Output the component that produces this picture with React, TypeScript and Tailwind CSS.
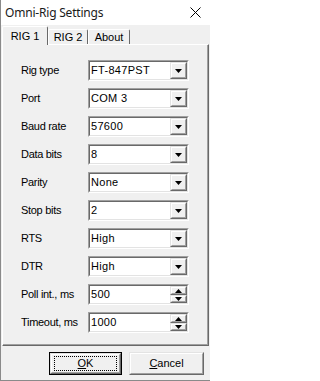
import React from "react";

type Field = {
  label: string;
  value: string;
  kind: "combo" | "spin";
};

const fields: Field[] = [
  { label: "Rig type", value: "FT-847PST", kind: "combo" },
  { label: "Port", value: "COM 3", kind: "combo" },
  { label: "Baud rate", value: "57600", kind: "combo" },
  { label: "Data bits", value: "8", kind: "combo" },
  { label: "Parity", value: "None", kind: "combo" },
  { label: "Stop bits", value: "2", kind: "combo" },
  { label: "RTS", value: "High", kind: "combo" },
  { label: "DTR", value: "High", kind: "combo" },
  { label: "Poll int., ms", value: "500", kind: "spin" },
  { label: "Timeout, ms", value: "1000", kind: "spin" },
];

// classic raised 3D edge
function Raised({ className = "", children }: { className?: string; children?: React.ReactNode }) {
  return (
    <div
      className={`border border-t-[#e3e3e3] border-l-[#e3e3e3] border-r-[#696969] border-b-[#696969] bg-[#f0f0f0] ${className}`}
    >
      <div className="w-full h-full border border-t-white border-l-white border-r-[#a0a0a0] border-b-[#a0a0a0] flex items-center justify-center">
        {children}
      </div>
    </div>
  );
}

function DropButton() {
  return (
    <Raised className="w-[17px] h-[17px]">
      <svg width="7" height="4" viewBox="0 0 7 4">
        <path d="M0 0h7L3.5 4z" fill="#000" />
      </svg>
    </Raised>
  );
}

function SpinButton() {
  return (
    <div className="flex flex-col w-[17px] h-[17px]">
      <Raised className="w-[17px] h-[9px]">
        <svg width="7" height="4" viewBox="0 0 7 4">
          <path d="M3.5 0L7 4H0z" fill="#000" />
        </svg>
      </Raised>
      <Raised className="w-[17px] h-[8px]">
        <svg width="7" height="4" viewBox="0 0 7 4">
          <path d="M0 0h7L3.5 4z" fill="#000" />
        </svg>
      </Raised>
    </div>
  );
}

function FieldBox({ field }: { field: Field }) {
  return (
    <div className="w-[101px] h-[21px] border border-t-[#a0a0a0] border-l-[#a0a0a0] border-r-white border-b-white">
      <div className="w-full h-full border border-t-[#696969] border-l-[#696969] border-r-[#e3e3e3] border-b-[#e3e3e3] bg-white flex items-center justify-between">
        <span className="pl-[1px] leading-none text-black tracking-[0.3px]">{field.value}</span>
        {field.kind === "combo" ? <DropButton /> : <SpinButton />}
      </div>
    </div>
  );
}

function Tab({ label, active, width }: { label: string; active?: boolean; width: string }) {
  if (active) {
    return (
      <div
        className={`relative z-10 -mb-px h-[19px] ${width} bg-[#f0f0f0] border-t border-l border-t-white border-l-white border-r border-r-[#696969] rounded-t-[2px] flex items-center justify-center`}
      >
        {label}
      </div>
    );
  }
  return (
    <div
      className={`h-[15px] ${width} bg-[#f0f0f0] border-t border-l border-t-white border-l-white border-r border-r-[#696969] rounded-t-[2px] flex items-center justify-center`}
    >
      {label}
    </div>
  );
}

function DialogButton({ label, def, width }: { label: React.ReactNode; def?: boolean; width: string }) {
  if (def) {
    return (
      <div className={`${width} h-[23px] border border-black`}>
        <Raised className="w-full h-full">
          <div className="w-[63px] h-[15px] border border-dotted border-black flex items-center justify-center">
            {label}
          </div>
        </Raised>
      </div>
    );
  }
  return <Raised className={`${width} h-[23px]`}>{label}</Raised>;
}

export default function App() {
  return (
    <div
      className="w-[210px] h-[381px] bg-[#f0f0f0] border-l border-b border-[#8a8a8a] text-[11px] text-black overflow-hidden flex flex-col"
      style={{ fontFamily: '"Liberation Sans", Arial, sans-serif' }}
    >
      <div
        className="h-[25px] bg-white flex items-center justify-between pl-[4px] pr-[9px] shrink-0"
        style={{ fontFamily: '"Noto Sans", "Open Sans", sans-serif' }}
      >
        <span className="text-[12px] tracking-[-0.2px] text-[#1a1a1a]">Omni-Rig Settings</span>
        <svg width="11" height="11" viewBox="0 0 11 11">
          <path d="M0.5 0.5l10 10M10.5 0.5l-10 10" stroke="#000" strokeWidth="1" />
        </svg>
      </div>

      <div className="mt-px h-[18px] ml-[1px] flex items-end shrink-0">
        <Tab label="RIG 1" active width="w-[46px]" />
        <Tab label="RIG 2" width="w-[40px]" />
        <Tab label="About" width="w-[42px]" />
      </div>

      <div className="ml-[1px] w-[207px] h-[302px] shrink-0 border border-t-white border-l-white border-r-[#696969] border-b-[#696969]">
        <div className="w-full h-full border-r border-b border-r-[#a0a0a0] border-b-[#a0a0a0] pt-[15px] pl-[18px] flex flex-col gap-[7px]">
          {fields.map((f) => (
            <div key={f.label} className="flex items-center h-[21px]">
              <span className="w-[67px] leading-none tracking-[-0.3px]">{f.label}</span>
              <FieldBox field={f} />
            </div>
          ))}
        </div>
      </div>

      <div className="mt-[6px] flex justify-end gap-[7px] pr-[6px]">
        <DialogButton
          def
          width="w-[73px]"
          label={
            <span>
              <span className="underline">O</span>K
            </span>
          }
        />
        <DialogButton
          width="w-[75px]"
          label={
            <span>
              <span className="underline">C</span>ancel
            </span>
          }
        />
      </div>
    </div>
  );
}
